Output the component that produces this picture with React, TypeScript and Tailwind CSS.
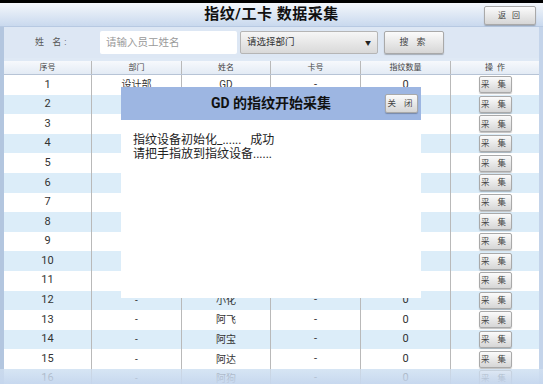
import React from 'react'

const font = { fontFamily: 'Roboto, "Noto Sans CJK SC", sans-serif' }

type Row = { id: number; dept: string; name: string; card: string; count: string }

const names = ['GD', '', '', '', '', '', '', '', '', '', '', '小化', '阿飞', '阿宝', '阿达', '阿狗']

// rows 2-11 sit fully behind the dialog, so their middle cells stay empty
const rows: Row[] = names.map((name, i) => {
  const hidden = i >= 1 && i <= 10
  return {
    id: i + 1,
    dept: hidden ? '' : i === 0 ? '设计部' : '-',
    name,
    card: hidden ? '' : '-',
    count: hidden ? '' : '0',
  }
})

const cols = 'grid grid-cols-[88px_90px_89px_90px_90px_88px]'

function GrayButton({ label, className }: { label: string; className: string }) {
  return (
    <button
      className={`flex items-center justify-center border border-[#a9a9a9] rounded-[2px] bg-gradient-to-b from-[#fbfbfb] to-[#d6d6d6] text-[#444] shadow-[0_1px_1px_rgba(0,0,0,0.25)] ${className}`}
    >
      {label}
    </button>
  )
}

export default function App() {
  return (
    <div className="relative w-[543px] h-[384px] overflow-hidden bg-[#dfe9f5]" style={font}>
      {/* top status strip */}
      <div className="h-[3px] bg-black" />

      {/* Title bar */}
      <div className="relative h-[24px] flex items-center justify-center bg-gradient-to-b from-[#f4f7fb] to-[#c9d9ee] border-b border-[#b7c9e2]">
        <h1 className="text-[15px] font-bold text-[#111] tracking-[0.5px]">指纹/工卡 数据采集</h1>
        <GrayButton label="返 回" className="absolute right-[7px] top-[3px] w-[52px] h-[19px] text-[8px] tracking-[2px]" />
      </div>

      {/* Search row */}
      <div className="h-[31px] flex items-center bg-[#dde7f4]">
        <span className="w-[100px] pl-[35px] text-[9px] text-[#555] tracking-[3px]">姓 名:</span>
        <div className="w-[137px] h-[23px] bg-white rounded-[2px] flex items-center pl-[6px] text-[10.5px] text-[#9a9a9a]">
          请输入员工姓名
        </div>
        <div className="ml-[3px] w-[138px] h-[23px] rounded-[2px] border border-[#b5b5b5] bg-gradient-to-b from-[#f6f6f6] to-[#d9d9d9] flex items-center justify-between px-[6px] text-[9.5px] text-[#333]">
          <span>请选择部门</span>
          <span className="text-[6px] text-[#222]">▼</span>
        </div>
        <GrayButton label="搜 索" className="ml-[6px] w-[60px] h-[23px] text-[9px] tracking-[3px]" />
      </div>

      {/* Table */}
      <div className="mt-[3px] mx-[4px] bg-white">
        <div className={`${cols} h-[14px] bg-gradient-to-b from-[#f7f9fc] to-[#e3ebf5] border-b border-[#b7c4d6] text-[8px] text-[#444]`}>
          {['序号', '部门', '姓名', '卡号', '指纹数量', '操  作'].map((h, i) => (
            <div key={h} className={`flex items-center justify-center whitespace-pre ${i < 5 ? 'border-r border-[#b9b9b9]' : ''}`}>
              {h}
            </div>
          ))}
        </div>
        {rows.map((r) => (
          <div
            key={r.id}
            className={`${cols} h-[19.6px] text-[11px] text-[#333] ${r.id % 2 === 0 ? 'bg-[#dcedf9]' : 'bg-white'}`}
          >
            <div className="flex items-center justify-center border-r border-[#b9b9b9]">{r.id}</div>
            <div className="flex items-center justify-center border-r border-[#b9b9b9] text-[10px]">{r.dept}</div>
            <div className="flex items-center justify-center border-r border-[#b9b9b9] text-[10px]">{r.name}</div>
            <div className="flex items-center justify-center border-r border-[#b9b9b9]">{r.card}</div>
            <div className="flex items-center justify-center border-r border-[#b9b9b9]">{r.count}</div>
            <div className="flex items-center justify-center">
              <GrayButton label="采 集" className="w-[33px] h-[17px] text-[8.5px] tracking-[3px]" />
            </div>
          </div>
        ))}
      </div>

      {/* side frames */}
      <div className="absolute left-0 top-[27px] bottom-0 w-[4px] bg-[#b3c6df]" />
      <div className="absolute right-0 top-[27px] bottom-0 w-[4px] bg-[#c4d4ea]" />

      {/* bottom fade */}
      <div className="absolute left-0 right-0 bottom-0 h-[15px] bg-gradient-to-b from-[#d4e2f2]/70 to-[#c6d7ee]/95" />

      {/* Modal */}
      <div className="absolute left-[121px] top-[87px] w-[300px] h-[211px] bg-white">
        <div className="relative h-[33px] bg-[#9db6e2] flex items-center justify-center">
          <span className="text-[14px] font-bold text-[#111]">GD 的指纹开始采集</span>
          <GrayButton label="关 闭" className="absolute right-[3px] top-[7px] w-[33px] h-[19px] text-[8.5px] tracking-[3px]" />
        </div>
        <div className="pt-[13px] pl-[12px] text-[12px] leading-[14px] text-[#222]">
          <div className="whitespace-pre">指纹设备初始化_......   成功</div>
          <div>请把手指放到指纹设备......</div>
        </div>
      </div>
    </div>
  )
}
